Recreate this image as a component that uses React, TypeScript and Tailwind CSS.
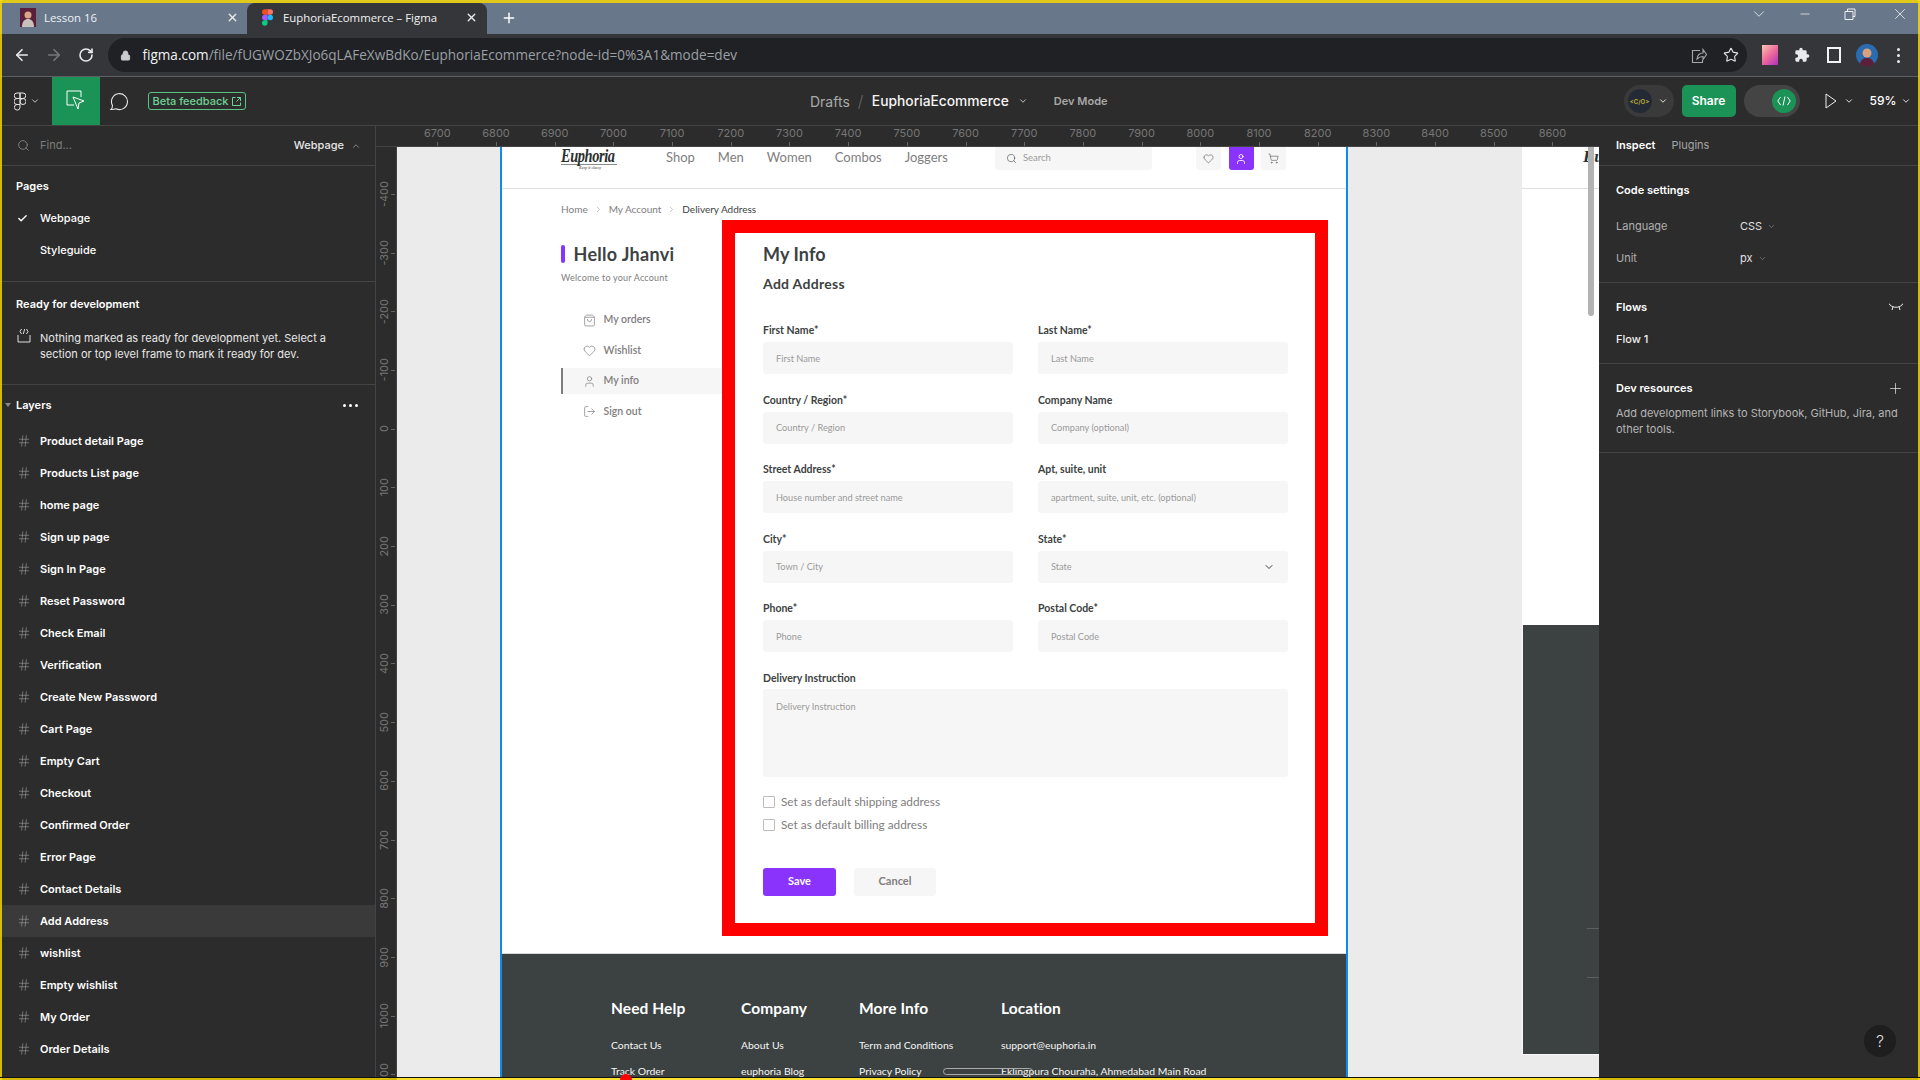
import { ArrowLeft, ArrowRight, Check, ChevronDown, ChevronRight, ChevronUp, Hash, Heart, Lock, LogOut, Minus, Plus, RotateCw, Search, ShoppingBag, ShoppingCart, Star, User, X } from 'lucide-react'

const hRuler = ['6700', '6800', '6900', '7000', '7100', '7200', '7300', '7400', '7500', '7600', '7700', '7800', '7900', '8000', '8100', '8200', '8300', '8400', '8500', '8600']
const vRuler = ['-400', '-300', '-200', '-100', '0', '100', '200', '300', '400', '500', '600', '700', '800', '900', '1000', '1100']
const layers = ['Product detail Page', 'Products List page', 'home page', 'Sign up page', 'Sign In Page', 'Reset Password', 'Check Email', 'Verification', 'Create New Password', 'Cart Page', 'Empty Cart', 'Checkout', 'Confirmed Order', 'Error Page', 'Contact Details', 'Add Address', 'wishlist', 'Empty wishlist', 'My Order', 'Order Details']

const fields = [
  { label: 'First Name*', hint: 'First Name' },
  { label: 'Last Name*', hint: 'Last Name' },
  { label: 'Country / Region*', hint: 'Country / Region' },
  { label: 'Company Name', hint: 'Company (optional)' },
  { label: 'Street Address*', hint: 'House number and street name' },
  { label: 'Apt, suite, unit', hint: 'apartment, suite, unit, etc. (optional)' },
  { label: 'City*', hint: 'Town / City' },
  { label: 'State*', hint: 'State', select: true },
  { label: 'Phone*', hint: 'Phone' },
  { label: 'Postal Code*', hint: 'Postal Code' },
]

const footerCols = [
  { title: 'Need Help', width: 'w-[130px]', links: ['Contact Us', 'Track Order'] },
  { title: 'Company', width: 'w-[118px]', links: ['About Us', 'euphoria Blog'] },
  { title: 'More Info', width: 'w-[142px]', links: ['Term and Conditions', 'Privacy Policy'] },
  { title: 'Location', width: 'w-[300px]', links: ['support@euphoria.in', 'Eklingpura Chouraha, Ahmedabad Main Road'] },
]

const FigmaColorLogo = () => (
  <svg width="11" height="17" viewBox="0 0 12 18">
    <path d="M6 0H3a3 3 0 0 0 0 6h3z" fill="#f24e1e" />
    <path d="M6 0h3a3 3 0 0 1 0 6H6z" fill="#ff7262" />
    <path d="M6 6H3a3 3 0 0 0 0 6h3z" fill="#a259ff" />
    <circle cx="9" cy="9" r="3" fill="#1abcfe" />
    <path d="M6 12H3a3 3 0 1 0 3 3z" fill="#0acf83" />
  </svg>
)

const FigmaOutlineLogo = () => (
  <svg width="12" height="19" viewBox="0 0 12 18" fill="none" stroke="#e6e6e6" strokeWidth="1">
    <path d="M6 .5H3a2.500 2.500 0 0 0 0 5.500h3zM6 .5h3a2.500 2.500 0 0 1 0 5.500H6zM6 6H3a3 3 0 0 0 0 6h3z" />
    <circle cx="9" cy="9" r="3" />
    <path d="M6 12H3a2.800 2.800 0 1 0 3 2.800z" />
  </svg>
)

const Tabs = () => (
  <div className="flex h-[34px] shrink-0 items-end bg-[#68778a] pl-[2px] font-['Open_Sans',sans-serif] text-[11.4px] text-white">
    <div className="flex h-[31px] w-[245px] items-center pb-[2px] pl-[18px] pr-[8px]">
      <svg width="16" height="19" viewBox="0 0 16 19">
        <rect width="16" height="19" fill="#5c1f3a" />
        <circle cx="8" cy="7" r="3.500" fill="#d9a688" />
        <path d="M2 19c0-6 3-8 6-8s6 2 6 8z" fill="#c9c2bc" />
      </svg>
      <span className="ml-[8px] flex-1 text-[#eef1f4]">Lesson 16</span>
      <X size={13} strokeWidth={2.5} className="text-[#e8e8e8]" />
    </div>
    <div className="flex h-[31px] w-[240px] items-center rounded-t-[8px] bg-[#35363a] pb-[2px] pl-[15px] pr-[9px]">
      <FigmaColorLogo />
      <span className="ml-[10px] flex-1 text-[#f1f3f4]">EuphoriaEcommerce – Figma</span>
      <X size={13} strokeWidth={2.5} className="text-[#e8e8e8]" />
    </div>
    <div className="flex h-[31px] items-center pb-[2px] pl-[14px]">
      <Plus size={16} strokeWidth={2.2} />
    </div>
    <div className="flex h-[31px] flex-1 items-start justify-end pt-[2px] text-[#f0f0f0]">
      <ChevronDown size={18} strokeWidth={1.1} className="mr-[30px]" />
      <Minus size={14} strokeWidth={1.3} className="mr-[32px] mt-[2px]" />
      <svg width="12" height="12" viewBox="0 0 12 12" fill="none" stroke="currentColor" className="mr-[35px] mt-[3px]">
        <path d="M3.500 3V1h7.500v7.500H9M1 3.500h8v8H1z" />
      </svg>
      <X size={18} strokeWidth={1.1} className="mr-[11px]" />
    </div>
  </div>
)

const AddressBar = () => (
  <div className="flex h-[43px] shrink-0 items-center border-b border-[#5e5f62] bg-[#35363a] text-[#e8eaed]">
    <ArrowLeft size={18} strokeWidth={2.2} className="ml-[13px]" />
    <ArrowRight size={18} strokeWidth={2.2} className="ml-[14px] text-[#77787b]" />
    <RotateCw size={16} strokeWidth={2.4} className="ml-[15px]" />
    <div className="ml-[14px] flex h-[34px] flex-1 items-center rounded-full bg-[#202124] pl-[12px] pr-[8.5px]">
      <Lock size={11} fill="#c9cbce" strokeWidth={2} className="text-[#c9cbce]" />
      <span className="ml-[11.5px] flex-1 whitespace-nowrap font-['Open_Sans',sans-serif] text-[13.55px] text-[#9aa0a6]">
        <span className="text-[#f1f3f4]">figma.com</span>/file/fUGWOZbXJo6qLAFeXwBdKo/EuphoriaEcommerce?node-id=0%3A1&amp;mode=dev
      </span>
      <svg width="16" height="17" viewBox="0 0 16 17" fill="none" stroke="#a5a7ab" strokeWidth="1.1" className="mr-[16px]">
        <path d="M6 12c.5-4 3-6 6-6V2.500l3.500 5-3.500 5V9.500c-2.500 0-4.500 1-6 2.500z" />
        <path d="M9 3.500H1.500v12h10V13" />
      </svg>
      <Star size={16} strokeWidth={1.7} className="text-[#dfe1e5]" />
    </div>
    <div className="ml-[15px] h-[20px] w-[16px] bg-[linear-gradient(135deg,#f9c6b2,#ee6a9a_50%,#b02fc0)]" />
    <svg width="16" height="16" viewBox="0 0 24 24" fill="#e8eaed" className="ml-[16px]">
      <path d="M20.500 11H19V7a2 2 0 0 0-2-2h-4V3.500a2.500 2.500 0 0 0-5 0V5H4a2 2 0 0 0-2 2v3.800h1.500a2.700 2.700 0 0 1 0 5.400H2V20a2 2 0 0 0 2 2h3.800v-1.500a2.700 2.700 0 0 1 5.400 0V22H17a2 2 0 0 0 2-2v-4h1.500a2.500 2.500 0 0 0 0-5z" />
    </svg>
    <div className="ml-[17px] flex h-[16px] w-[14px] justify-start border-[2px] border-[#f1f3f4]">
      <div className="h-full w-[7px] bg-[#35363a]" />
    </div>
    <svg width="22" height="22" viewBox="0 0 22 22" className="ml-[15px]">
      <circle cx="11" cy="11" r="11" fill="#2b6cb0" />
      <circle cx="11" cy="9" r="4.500" fill="#d9a27e" />
      <path d="M4 20c1-5 4-6 7-6s6 1 7 6a11 11 0 0 1-14 0z" fill="#5c1f3a" />
    </svg>
    <div className="ml-[19px] flex flex-col gap-[3px]">
      <div className="size-[3px] rounded-full bg-[#e8eaed]" />
      <div className="size-[3px] rounded-full bg-[#e8eaed]" />
      <div className="size-[3px] rounded-full bg-[#e8eaed]" />
    </div>
    <div className="w-[20px]" />
  </div>
)

const Toolbar = () => (
  <div className="flex h-[49px] shrink-0 items-center border-b border-[#444] bg-[#2c2c2c] font-['Inter',sans-serif] text-white">
    <div className="ml-[14px]">
      <FigmaOutlineLogo />
    </div>
    <ChevronDown size={10} strokeWidth={2} className="ml-[4px] text-[#ddd]" />
    <div className="ml-[12px] flex h-[48px] w-[48px] items-center justify-center bg-[#1b9356]">
      <svg width="20" height="22" viewBox="0 0 20 22" fill="none" stroke="#fff" strokeWidth="1">
        <path d="M8 15H1V1h14v6" />
        <path d="M7 7l11 4-5 2-1 6z" />
      </svg>
    </div>
    <svg width="20" height="20" viewBox="0 0 20 20" fill="none" stroke="#e6e6e6" strokeWidth="1.100" className="ml-[9px]">
      <path d="M2 18.500c1-1 1.500-2.500 1.500-4A8 8 0 1 1 7 17.800c-1.500.6-3 .8-5 .7z" />
    </svg>
    <div className="ml-[19px] flex h-[18px] w-[98px] items-center justify-center gap-[4px] rounded-[3px] border border-[#5cc284] text-[11px] font-medium text-[#6fd394]">
      Beta feedback
      <svg width="9" height="9" viewBox="0 0 9 9" fill="none" stroke="currentColor">
        <path d="M3.500.5H.5v8h8v-3M5 .5h3.500V4M8.500.5 4.500 4.500" />
      </svg>
    </div>
    <span className="ml-[564px] text-[14px] text-[#a9a9a9]">Drafts</span>
    <span className="ml-[8px] text-[16px] font-light text-[#666]">/</span>
    <span className="ml-[8.5px] text-[13.8px] font-medium text-[#f5f5f5]">EuphoriaEcommerce</span>
    <ChevronDown size={10} strokeWidth={2} className="ml-[9px] text-[#ddd]" />
    <span className="ml-[26px] text-[11px] font-semibold text-[#a8a8a8]">Dev Mode</span>
    <div className="ml-[516px] flex h-[32px] w-[50px] items-center rounded-full bg-[#3a3a3a] pl-[4px]">
      <div className="flex size-[24px] items-center justify-center rounded-full bg-[#232a36] text-[6px] font-semibold text-[#c4b72e]">&lt;C/O&gt;</div>
      <ChevronDown size={10} strokeWidth={2} className="ml-[6px]" />
    </div>
    <div className="ml-[8px] flex h-[32px] w-[54px] items-center justify-center rounded-[5px] bg-[#1b9356] text-[12px] font-semibold">Share</div>
    <div className="ml-[8px] flex h-[32px] w-[56px] items-center justify-end rounded-full bg-[#444] pr-[4px]">
      <div className="flex size-[24px] items-center justify-center rounded-full bg-[#1b9356]">
        <svg width="14" height="10" viewBox="0 0 14 10" fill="none" stroke="#fff">
          <path d="M3.500 1 .8 5l2.700 4M10.500 1l2.700 4-2.700 4M8 .5l-2 9" />
        </svg>
      </div>
    </div>
    <svg width="12" height="16" viewBox="0 0 12 16" fill="none" stroke="#eee" className="ml-[25px]">
      <path d="M1 1v14l10-7z" />
    </svg>
    <ChevronDown size={10} strokeWidth={2} className="ml-[7px]" />
    <span className="ml-[16px] text-[12px] font-medium">59%</span>
    <ChevronDown size={10} strokeWidth={2} className="ml-[5px]" />
  </div>
)

const LeftPanel = () => (
  <div className="flex h-full w-[376px] shrink-0 flex-col overflow-hidden border-r border-[#444] bg-[#2c2c2c] font-['Inter',sans-serif] text-[11px] text-white">
    <div className="flex h-[40px] shrink-0 items-center border-b border-[#444] pl-[17px] pr-[14px]">
      <Search size={13} strokeWidth={1.5} className="text-[#8c8c8c]" />
      <span className="ml-[10px] flex-1 text-[#7d7d7d]">Find...</span>
      <span className="font-medium text-[#e6e6e6]">Webpage</span>
      <ChevronUp size={10} strokeWidth={2} className="ml-[7px] text-[#999]" />
    </div>
    <div className="h-[116px] shrink-0 border-b border-[#444]">
      <div className="ml-[16px] mt-[13px] flex h-[14px] items-center font-semibold">Pages</div>
      <div className="mt-[9px] flex h-[32px] items-center pl-[17px] font-medium">
        <Check size={11} strokeWidth={3} className="mr-[12px]" />
        Webpage
      </div>
      <div className="flex h-[32px] items-center pl-[40px] font-medium">Styleguide</div>
    </div>
    <div className="h-[103px] shrink-0 border-b border-[#444]">
      <div className="ml-[16px] mt-[14px] flex h-[16px] items-center font-semibold">Ready for development</div>
      <div className="mt-[18px] flex">
        <svg width="14" height="16" viewBox="0 0 14 16" fill="none" stroke="#ddd" strokeWidth="1" className="ml-[17px] mr-[9px] mt-[-2px]">
          <path d="M1 7v7h12V7M4.500 1 3 3.500 4.500 6M9.500 1 11 3.500 9.500 6M7.700 1 6.300 6" />
        </svg>
        <p className="w-[300px] leading-[16px] text-[#e8e8e8]">Nothing marked as ready for development yet. Select a section or top level frame to mark it ready for dev.</p>
      </div>
    </div>
    <div className="flex h-[40px] shrink-0 items-center pl-[5px] pr-[17px]">
      <div className="mr-[5px] size-0 border-x-[3px] border-t-[4px] border-x-transparent border-t-[#8a8a8a]" />
      <span className="flex-1 font-semibold">Layers</span>
      <div className="flex gap-[3px]">
        <div className="size-[3px] rounded-full bg-white" />
        <div className="size-[3px] rounded-full bg-white" />
        <div className="size-[3px] rounded-full bg-white" />
      </div>
    </div>
    {layers.map((name) => (
      <div key={name} className={`flex h-[32px] shrink-0 items-center pl-[17px] font-semibold ${name === 'Add Address' ? 'bg-[#3a3a3a]' : ''}`}>
        <Hash size={14} strokeWidth={1} className="mr-[9px] text-[#a0a0a0]" />
        {name}
      </div>
    ))}
  </div>
)

const RightPanel = () => (
  <div className="relative flex h-full w-[321px] shrink-0 flex-col bg-[#2c2c2c] font-['Inter',sans-serif] text-[11px] text-white">
    <div className="flex h-[40px] shrink-0 items-center gap-[16px] border-b border-[#444] pl-[17px]">
      <span className="font-semibold">Inspect</span>
      <span className="text-[#a5a5a5]">Plugins</span>
    </div>
    <div className="h-[117px] shrink-0 border-b border-[#444] pl-[17px]">
      <div className="mt-[16px] flex h-[16px] items-center font-semibold">Code settings</div>
      <div className="mt-[12px] flex h-[32px] items-center">
        <span className="w-[124px] text-[#b0b0b0]">Language</span>
        <span className="text-[#e0e0e0]">CSS</span>
        <ChevronDown size={9} strokeWidth={1.5} className="ml-[5px] text-[#999]" />
      </div>
      <div className="flex h-[32px] items-center">
        <span className="w-[124px] text-[#b0b0b0]">Unit</span>
        <span className="text-[#e0e0e0]">px</span>
        <ChevronDown size={9} strokeWidth={1.5} className="ml-[5px] text-[#999]" />
      </div>
    </div>
    <div className="h-[81px] shrink-0 border-b border-[#444] pl-[17px] pr-[15px]">
      <div className="mt-[16px] flex h-[16px] items-center justify-between font-semibold">
        Flows
        <svg width="14" height="8" viewBox="0 0 14 8" fill="none" stroke="#eee" className="mr-[2px]">
          <path d="M1 2c3 3 9 3 12 0M4 3.500 3 7M10 3.500 11 7M1 2 0 .5M13 2l1-1.500" />
        </svg>
      </div>
      <div className="mt-[16px] flex h-[16px] items-center font-medium text-[#f0f0f0]">Flow 1</div>
    </div>
    <div className="h-[89px] shrink-0 border-b border-[#444] pl-[17px] pr-[15px]">
      <div className="mt-[16px] flex h-[16px] items-center justify-between font-semibold">
        Dev resources
        <Plus size={17} strokeWidth={1.1} className="mr-[1px] text-[#ddd]" />
      </div>
      <p className="mt-[9px] leading-[16px] text-[#b5b5b5]">Add development links to Storybook, GitHub, Jira, and other tools.</p>
    </div>
    <div className="absolute bottom-[23px] right-[24px] flex size-[32px] items-center justify-center rounded-full bg-[#1e1e1e] text-[16px] font-light text-[#ddd]">?</div>
  </div>
)

const HRuler = () => (
  <div className="flex h-[21px] shrink-0 border-b border-[#444] bg-[#2c2c2c] pl-[32px] font-['Inter',sans-serif] text-[11px] text-[#767676]">
    {hRuler.map((n) => (
      <div key={n} className="relative flex h-[20px] w-[58.7px] shrink-0 justify-center">
        <span className="leading-[14px]">{n}</span>
        <div className="absolute bottom-0 left-1/2 h-[4px] w-px bg-[#666]" />
      </div>
    ))}
  </div>
)

const VRuler = () => (
  <div className="h-full w-[21px] shrink-0 overflow-hidden border-r border-[#444] bg-[#2c2c2c] pt-[17.6px] font-['Inter',sans-serif] text-[11px] text-[#767676]">
    {vRuler.map((n) => (
      <div key={n} className="relative flex h-[58.7px] items-center pl-[2px]">
        <span className="rotate-180 leading-[12px] [writing-mode:vertical-rl]">{n}</span>
        <div className="absolute right-[1px] top-1/2 h-px w-[4px] bg-[#666]" />
      </div>
    ))}
  </div>
)

const Logo = ({ className }: { className: string }) => (
  <div className={`font-['Liberation_Serif',serif] font-bold italic text-[#2a2f2f] ${className}`}>
    <div className="w-[70px] origin-left scale-x-[0.8] border-b border-[#8a8a8a] text-[18px] leading-[15px] tracking-[-0.5px]">Euphoria</div>
    <div className="ml-[18px] text-[4px] leading-[5px] text-[#777]">Keep it classy</div>
  </div>
)

const Field = ({ label, hint, select }: { label: string; hint: string; select?: boolean }) => (
  <div>
    <div className="text-[10.5px] font-bold leading-[14px] text-[#3c4242]">{label}</div>
    <div className="mt-[5px] flex h-[32px] items-center justify-between rounded-[3px] bg-[#f6f6f6] px-[13px] pt-[1px] text-[9.2px] text-[#9a9a9a]">
      {hint}
      {select && <ChevronDown size={12} strokeWidth={2} className="text-[#3c4242]" />}
    </div>
  </div>
)

const SideItem = ({ label, icon, active }: { label: string; icon: React.ReactNode; active?: boolean }) => (
  <div className={`flex h-[26px] items-center text-[#807d7e] ${active ? 'border-l-[2px] border-[#807d7e] bg-[#f6f6f6] pl-[20px]' : 'pl-[22px]'}`}>
    <div className="w-[20.5px]">{icon}</div>
    <span className="text-[10.5px] font-semibold">{label}</span>
  </div>
)

const Frame = () => (
  <div className="absolute left-[103px] top-0 h-[931px] w-[848px] overflow-hidden border-x-2 border-[#0d8ce9] bg-white font-['Lato',sans-serif]">
    <div className="flex h-[42px] items-start border-b border-[#e0e0e0] pl-[59px]">
      <Logo className="mt-[2px] w-[105px]" />
      <nav className="mt-[2px] flex gap-[23px] text-[13px] leading-[16px] text-[#807d7e]">
        <span>Shop</span>
        <span>Men</span>
        <span>Women</span>
        <span>Combos</span>
        <span>Joggers</span>
      </nav>
      <div className="ml-[47px] flex h-[23px] w-[157px] items-center rounded-b-[3px] bg-[#f6f6f6] pl-[11px] text-[9.5px] text-[#9a9a9a]">
        <Search size={11} strokeWidth={1.6} className="mr-[6px] text-[#666]" />
        Search
      </div>
      <div className="ml-[44px] flex h-[23px] w-[25px] items-center justify-center rounded-b-[3px] bg-[#f6f6f6]">
        <Heart size={11} strokeWidth={1.5} className="text-[#666]" />
      </div>
      <div className="ml-[8px] flex h-[23px] w-[25px] items-center justify-center rounded-b-[3px] bg-[#8a33fd]">
        <User size={12} strokeWidth={1.7} className="text-white" />
      </div>
      <div className="ml-[7px] flex h-[23px] w-[25px] items-center justify-center rounded-b-[3px] bg-[#f6f6f6]">
        <ShoppingCart size={11} strokeWidth={1.5} className="text-[#666]" />
      </div>
    </div>
    <div className="ml-[59px] mt-[13px] flex h-[14px] items-center text-[10px] text-[#807d7e]">
      Home
      <ChevronRight size={9} strokeWidth={1.2} className="mx-[6px]" />
      My Account
      <ChevronRight size={9} strokeWidth={1.2} className="mx-[6px]" />
      <span className="text-[#3c4242]">Delivery Address</span>
    </div>
    <div className="mt-[4px] flex pl-[59px]">
      <div className="w-[161px]">
        <div className="mt-[24px] flex h-[20px] items-center">
          <div className="h-[18px] w-[3.5px] rounded-full bg-[#8a33fd]" />
          <span className="ml-[9px] text-[18px] font-bold tracking-[0.3px] text-[#3c4242]">Hello Jhanvi</span>
        </div>
        <div className="mt-[8px] text-[9px] leading-[12px] tracking-[0.2px] text-[#807d7e]">Welcome to your Account</div>
        <div className="mt-[23px] flex flex-col gap-[4.5px]">
          <SideItem label="My orders" icon={<ShoppingBag size={13} strokeWidth={1.3} />} />
          <SideItem label="Wishlist" icon={<Heart size={13} strokeWidth={1.3} />} />
          <SideItem label="My info" active icon={<User size={13} strokeWidth={1.3} />} />
          <SideItem label="Sign out" icon={<LogOut size={13} strokeWidth={1.3} />} />
        </div>
      </div>
      <div className="h-[716px] w-[606px] border-[13px] border-[#ff0000] pl-[28px] pt-[9px]">
        <h1 className="text-[18px] font-bold leading-[24px] tracking-[0.1px] text-[#3c4242]">My Info</h1>
        <h2 className="mt-[8px] text-[14px] font-bold leading-[20px] tracking-[0.3px] text-[#3c4242]">Add Address</h2>
        <div className="mt-[29px] grid w-[525px] grid-cols-2 gap-x-[25px] gap-y-[18.5px]">
          {fields.map((f) => (
            <Field key={f.label} label={f.label} hint={f.hint} select={f.select} />
          ))}
          <div className="col-span-2">
            <div className="text-[10.5px] font-bold leading-[14px] text-[#3c4242]">Delivery Instruction</div>
            <div className="mt-[4px] h-[88px] rounded-[3px] bg-[#f6f6f6] px-[13px] pt-[11px] text-[9.2px] leading-[13px] text-[#9a9a9a]">Delivery Instruction</div>
          </div>
        </div>
        <label className="mt-[19.5px] flex h-[12px] items-center gap-[6px] text-[11.8px] text-[#807d7e]">
          <span className="size-[12px] rounded-[1px] border border-[#bebcbd]" />
          Set as default shipping address
        </label>
        <label className="mt-[11px] flex h-[12px] items-center gap-[6px] text-[11.8px] text-[#807d7e]">
          <span className="size-[12px] rounded-[1px] border border-[#bebcbd]" />
          Set as default billing address
        </label>
        <div className="mt-[36.5px] flex gap-[18px] text-[11px] font-bold">
          <button className="h-[28px] w-[73px] rounded-[3px] bg-[#8a33fd] text-white">Save</button>
          <button className="h-[28px] w-[82px] rounded-[3px] bg-[#f6f6f6] text-[#807d7e]">Cancel</button>
        </div>
      </div>
    </div>
    <footer className="relative mt-[17px] flex h-[200px] border-t border-[#d8d8d8] bg-[#3c4242] pl-[109px] pt-[43px] text-white">
      {footerCols.map((c) => (
        <div key={c.title} className={`${c.width} shrink-0`}>
          <div className="h-[22px] text-[15.5px] font-bold leading-[22px] tracking-[0.1px]">{c.title}</div>
          <div className="mt-[20px] flex flex-col gap-[13px] whitespace-nowrap text-[10.4px] leading-[13px] text-[#f6f6f6]">
            {c.links.map((l) => (
              <span key={l}>{l}</span>
            ))}
          </div>
        </div>
      ))}
      <div className="absolute left-[441px] top-[114px] h-[7px] w-[90px] rounded-full border border-[#aaa]" />
    </footer>
  </div>
)

const SecondFrame = () => (
  <div className="absolute left-[1125px] top-0 flex h-[908px] w-[77px] flex-col overflow-hidden">
    <div className="h-[478px] shrink-0 bg-white">
      <div className="relative h-[42px] border-b border-[#e0e0e0]">
        <span className="absolute left-[61px] top-[2px] font-['Liberation_Serif',serif] text-[17px] font-bold italic leading-[15px] text-[#2a2f2f]">Eu</span>
      </div>
    </div>
    <div className="relative flex-1 border-b border-l border-[#f8f8f8] bg-[#3c4242]">
      <div className="absolute right-0 top-[303px] h-px w-[12px] bg-[#5a5f5f]" />
      <div className="absolute right-0 top-[352px] h-px w-[12px] bg-[#5a5f5f]" />
    </div>
    <div className="absolute left-[66px] top-0 h-[169px] w-[6px] rounded-b-full bg-[#b3b3b3]" />
  </div>
)

export default function App() {
  return (
    <div className="relative flex h-[1080px] w-[1920px] flex-col overflow-hidden bg-[#2c2c2c]">
      <Tabs />
      <AddressBar />
      <Toolbar />
      <div className="flex min-h-0 flex-1">
        <LeftPanel />
        <div className="flex min-w-0 flex-1 flex-col">
          <HRuler />
          <div className="flex min-h-0 flex-1">
            <VRuler />
            <div className="relative flex-1 overflow-hidden bg-[#ebebeb]">
              <Frame />
              <SecondFrame />
            </div>
          </div>
        </div>
        <RightPanel />
      </div>
      {/* yellow capture outline sits over everything, it's a see-through overlay in the reference */}
      <div className="absolute inset-x-0 top-0 h-[3px] bg-[#ffdd00]/80" />
      <div className="absolute inset-y-0 left-0 w-[2px] bg-[#ffdd00]/80" />
      <div className="absolute inset-y-0 right-0 w-[2px] bg-[#ffdd00]/80" />
      <div className="absolute inset-x-0 bottom-0 h-[3px] border-t border-[#111] bg-[#ffdd00]/80" />
      <div className="absolute left-[620px] top-[1074px] size-[12px] rounded-full bg-[#ff0000]" />
    </div>
  )
}
